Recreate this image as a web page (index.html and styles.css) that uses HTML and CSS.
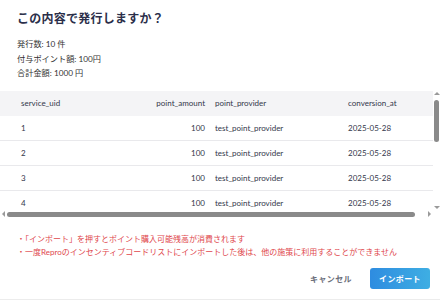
FILE: index.html
```html
<!DOCTYPE html>
<html lang="ja">
<head>
    <meta charset="UTF-8">
    <meta name="viewport" content="width=device-width, initial-scale=1.0">
    <title>インポート確認</title>
    <link rel="stylesheet" href="styles.css">
</head>
<body>
    <!-- 確認ダイアログ -->
    <div class="dialog">
        <h2 class="dialog-title">この内容で発行しますか？</h2>

        <div class="summary">
            <p>発行数: 10 件</p>
            <p>付与ポイント額: 100円</p>
            <p>合計金額: 1000 円</p>
        </div>

        <!-- プレビュー表 -->
        <div class="table-frame">
            <div class="table-view">
                <table class="preview-table">
                    <colgroup>
                        <col class="col-uid">
                        <col class="col-amount">
                        <col class="col-provider">
                        <col class="col-date">
                    </colgroup>
                    <thead>
                        <tr>
                            <th>service_uid</th>
                            <th class="num">point_amount</th>
                            <th>point_provider</th>
                            <th>conversion_at</th>
                        </tr>
                    </thead>
                    <tbody>
                        <tr><td>1</td><td class="num">100</td><td>test_point_provider</td><td>2025-05-28</td></tr>
                        <tr><td>2</td><td class="num">100</td><td>test_point_provider</td><td>2025-05-28</td></tr>
                        <tr><td>3</td><td class="num">100</td><td>test_point_provider</td><td>2025-05-28</td></tr>
                        <tr><td>4</td><td class="num">100</td><td>test_point_provider</td><td>2025-05-28</td></tr>
                    </tbody>
                </table>
            </div>

            <!-- スクロールバー -->
            <div class="vscroll">
                <span class="arrow arrow-up"></span>
                <div class="vtrack"><span class="vthumb"></span></div>
                <span class="arrow arrow-down"></span>
            </div>
            <div class="hscroll">
                <span class="arrow arrow-left"></span>
                <div class="htrack"><span class="hthumb"></span></div>
                <span class="arrow arrow-right"></span>
            </div>
            <div class="corner"></div>
        </div>

        <!-- 注意事項 -->
        <ul class="notes">
            <li>・「インポート」を押すとポイント購入可能残高が消費されます</li>
            <li>・一度Reproのインセンティブコードリストにインポートした後は、他の施策に利用することができません</li>
        </ul>

        <div class="actions">
            <button class="btn-cancel">キャンセル</button>
            <button class="btn-import">インポート</button>
        </div>
    </div>
</body>
</html>
```

FILE: styles.css
```css
* {
    margin: 0;
    padding: 0;
    box-sizing: border-box;
}

body {
    font-family: 'Lato', 'Noto Sans CJK JP', sans-serif;
    background: #ffffff;
    color: #333333;
    font-size: 8px;
}

/* ダイアログ */
.dialog {
    width: 440px;
    height: 300px;
    border-bottom: 1px solid #ececec;
    overflow: hidden;
}

.dialog-title {
    font-size: 12px;
    font-weight: bold;
    color: #2b2f4a;
    line-height: 20px;
    padding: 9px 17px 0;
    letter-spacing: 0.02em;
}

.summary {
    padding: 8px 17px 0;
    line-height: 14.5px;
    font-size: 8.2px;
    color: #333333;
}

/* プレビュー表 */
.table-frame {
    margin-top: 10px;
    display: grid;
    grid-template-columns: 1fr 7px;
    grid-template-rows: 120px 7px;
}

.table-view {
    overflow: hidden;
}

.preview-table {
    width: 446px;
    table-layout: fixed;
    border-collapse: collapse;
    color: #33364a;
}

.col-uid { width: 110px; }
.col-amount { width: 100px; }
.col-provider { width: 133px; }
.col-date { width: 103px; }

.preview-table th,
.preview-table td {
    height: 25px;
    padding: 0 5px;
    text-align: left;
    font-weight: normal;
    white-space: nowrap;
    border-bottom: 1px solid #e9e9ec;
}

.preview-table th {
    background: #f4f4f6;
    border-bottom: none;
}

.preview-table th:first-child,
.preview-table td:first-child {
    padding-left: 21px;
}

.preview-table .num {
    text-align: right;
}

/* スクロールバー */
.vscroll {
    display: flex;
    flex-direction: column;
    align-items: center;
}

.vtrack {
    flex: 1;
    width: 7px;
    padding: 4px 1px 0;
}

.vthumb {
    display: block;
    height: 42px;
    background: #8a8a8a;
    border-radius: 3px;
}

.hscroll {
    display: flex;
    align-items: center;
}

.htrack {
    flex: 1;
    height: 7px;
    padding: 1px 12px 1px 1px;
}

.hthumb {
    display: block;
    height: 5px;
    background: #8a8a8a;
    border-radius: 3px;
}

.arrow {
    width: 0;
    height: 0;
    border: 3px solid transparent;
    flex-shrink: 0;
}

.arrow-up {
    margin: 1px 0;
    border-top-width: 0;
    border-bottom: 3px solid #9a9a9a;
}

.arrow-down {
    margin: 2px 0;
    border-bottom-width: 0;
    border-top: 3px solid #9a9a9a;
}

.arrow-left {
    margin: 0 1px 0 2px;
    border-left-width: 0;
    border-right: 3px solid #9a9a9a;
}

.arrow-right {
    margin: 0 2px 0 1px;
    border-right-width: 0;
    border-left: 3px solid #9a9a9a;
}

.corner {
    background: #ffffff;
}

/* 注意事項 */
.notes {
    list-style: none;
    padding: 15px 17px 0;
    line-height: 13px;
    color: #e0474c;
}

/* ボタン */
.actions {
    display: flex;
    justify-content: flex-end;
    align-items: center;
    gap: 18px;
    padding: 9px 10px 0;
}

.btn-cancel {
    background: none;
    border: none;
    font-family: inherit;
    font-size: 8px;
    font-weight: bold;
    color: #6b6e7a;
    letter-spacing: 0.05em;
    cursor: pointer;
}

.btn-import {
    width: 60px;
    height: 21px;
    border: none;
    border-radius: 3px;
    background: linear-gradient(90deg, #2e8ce0 0%, #3eaee3 100%);
    color: #ffffff;
    font-family: inherit;
    font-size: 8px;
    font-weight: bold;
    letter-spacing: 0.05em;
    cursor: pointer;
}
```
